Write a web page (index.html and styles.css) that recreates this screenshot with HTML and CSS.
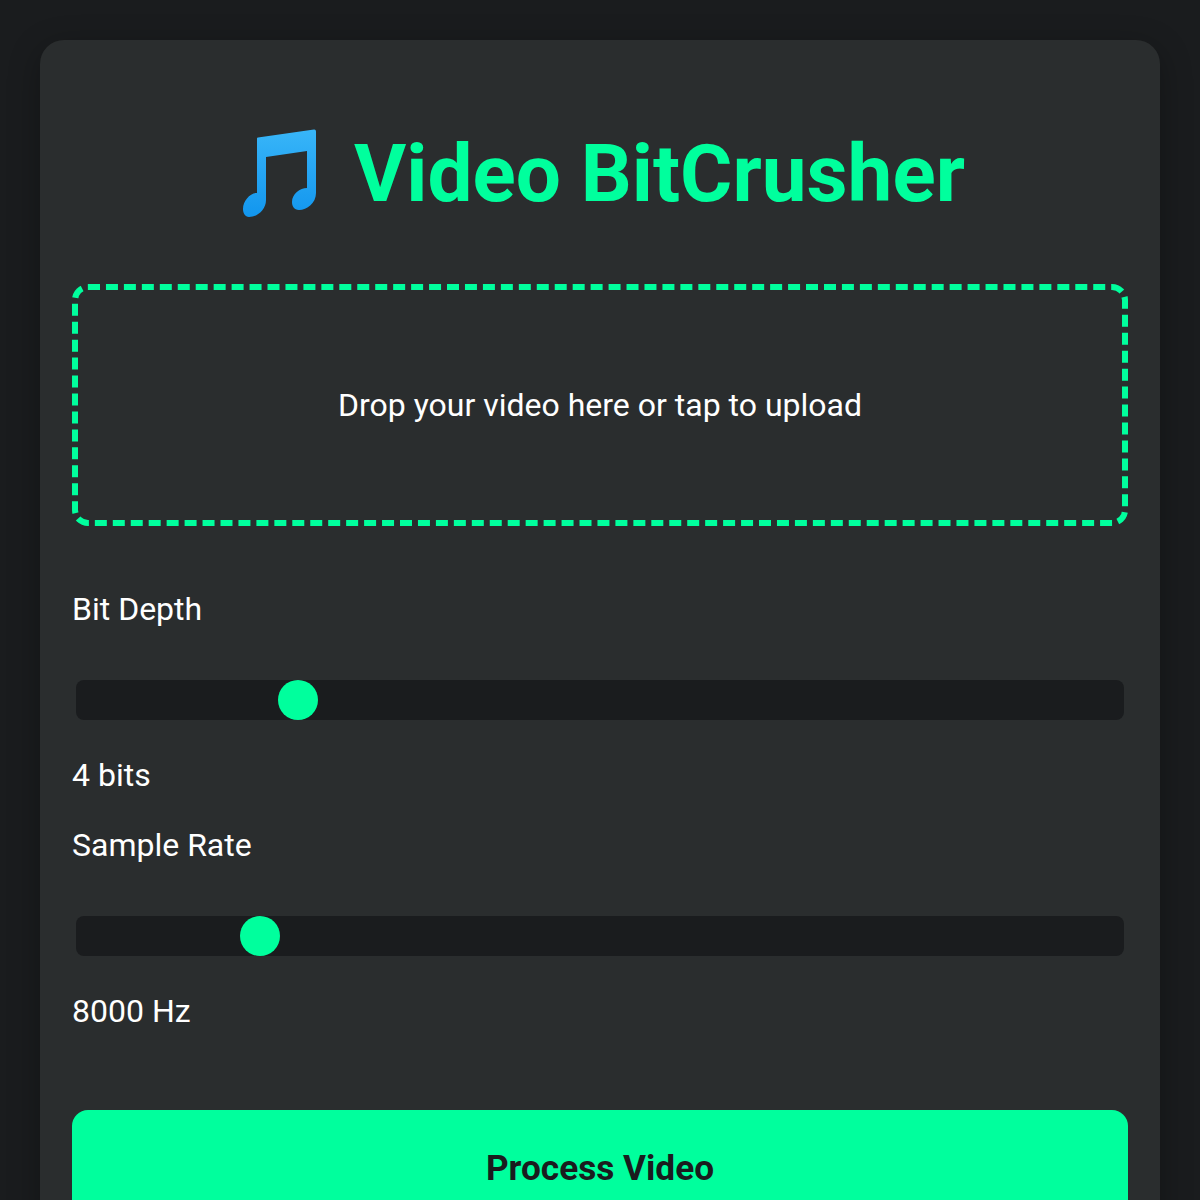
FILE: index.html
```html
<!DOCTYPE html>
<html lang="en">
<head>
<meta charset="utf-8">
<title>Video BitCrusher</title>
<link rel="stylesheet" href="styles.css">
</head>
<body>
<main class="card">
  <h1 class="title">
    <svg class="note" viewBox="0 0 80 95" aria-hidden="true">
      <defs>
        <linearGradient id="noteFill" x1="0" y1="0" x2="0" y2="1">
          <stop offset="0" stop-color="#38b6f8"/>
          <stop offset="0.4" stop-color="#29a8f4"/>
          <stop offset="1" stop-color="#1296ee"/>
        </linearGradient>
      </defs>
      <path fill="url(#noteFill)" d="M19 12.600 L75 4.600 Q77 4.400 77 6.500 L77 68 C77 78 68 85 60 85 C55 85 53 81 53 77 C53 69 61 63 68 63 L68 26 L27 32 L27 75 C27 85 18 92 10 92 C6 92 4 88 4 84 C4 76 11 68 18 68 L18 13.600 Q18 12.700 19 12.600 Z"/>
    </svg>
    <span>Video BitCrusher</span>
  </h1>
  <div class="dropzone">Drop your video here or tap to upload</div>
  <div class="control">
    <label class="label" for="bits">Bit Depth</label>
    <input class="slider" id="bits" type="range" min="1" max="16" value="4">
    <div class="value">4 bits</div>
  </div>
  <div class="control">
    <label class="label" for="rate">Sample Rate</label>
    <input class="slider" id="rate" type="range" min="1000" max="44100" value="8000">
    <div class="value">8000 Hz</div>
  </div>
  <button class="process" type="button">Process Video</button>
</main>
</body>
</html>
```

FILE: styles.css
```css
* {
  box-sizing: border-box;
}

html,
body {
  margin: 0;
  height: 1200px;
  overflow: hidden;
}

body {
  padding: 40px;
  background: #1a1c1e;
  color: #ffffff;
  font-family: Roboto, "Liberation Sans", sans-serif;
}

.card {
  background: #2a2d2e;
  border-radius: 24px;
  padding: 32px;
  min-height: 1300px;
  box-shadow: 0 8px 32px rgba(0, 0, 0, 0.3);
}

.title {
  display: flex;
  justify-content: center;
  align-items: center;
  gap: 35px;
  margin: 50px 0 58px;
  padding-left: 4px;
  color: #00ff9d;
  font-size: 80px;
  font-weight: 700;
  line-height: 104px;
}

.note {
  width: 80px;
  height: 95px;
  flex: none;
  margin-top: -4px;
}

.dropzone {
  border: 6px dashed #00ff9d;
  border-radius: 16px;
  padding: 96px 32px;
  margin-bottom: 64px;
  text-align: center;
  font-size: 32px;
  line-height: 38px;
}

.control {
  margin-bottom: 32px;
}

.label,
.value {
  display: block;
  font-size: 32px;
  line-height: 38px;
}

.slider {
  display: block;
  width: calc(100% - 8px);
  height: 40px;
  margin: 52px 4px 36px;
  padding: 0;
  background: #1a1c1e;
  border-radius: 8px;
  appearance: none;
  -webkit-appearance: none;
  outline: none;
}

.slider::-webkit-slider-thumb {
  -webkit-appearance: none;
  width: 40px;
  height: 40px;
  border-radius: 50%;
  background: #00ff9d;
  border: 0;
}

.process {
  display: block;
  width: 100%;
  height: 116px;
  margin-top: 80px;
  border: 0;
  border-radius: 16px;
  background: #00ff9d;
  color: #1a1c1e;
  font-family: inherit;
  font-size: 35.2px;
  font-weight: 700;
}
```
